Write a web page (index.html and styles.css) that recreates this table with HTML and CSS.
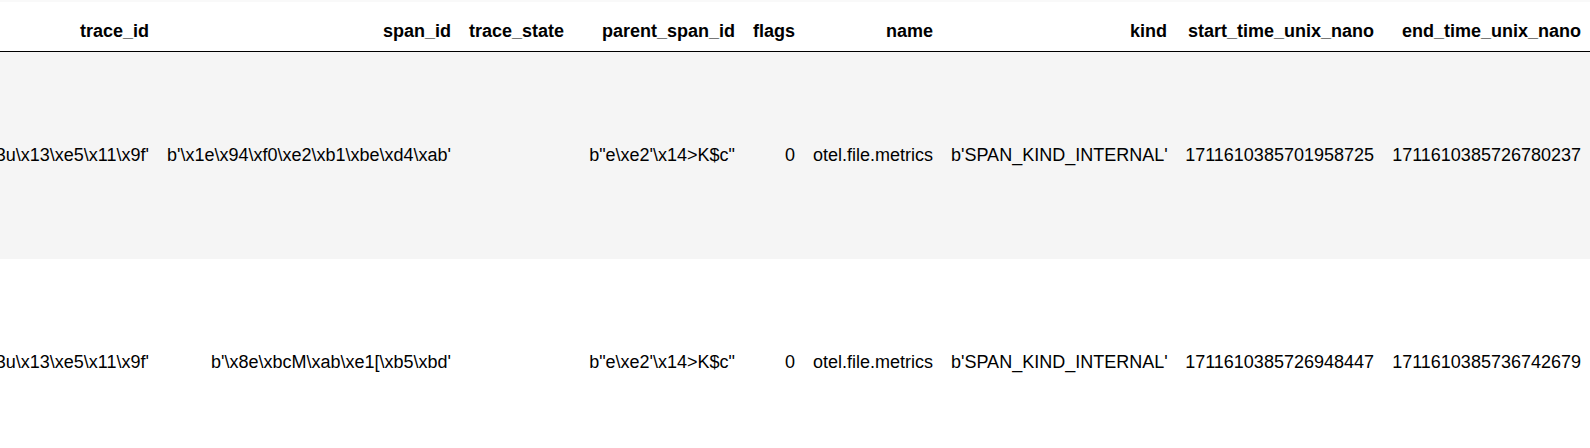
FILE: index.html
```html
<!DOCTYPE html>
<html>
<head>
<meta charset="utf-8">
<link rel="stylesheet" href="styles.css">
</head>
<body>
<div class="output">
  <div class="scroller">
    <table class="dataframe">
      <colgroup>
        <col class="c-trace">
        <col class="c-span">
        <col class="c-state">
        <col class="c-parent">
        <col class="c-flags">
        <col class="c-name">
        <col class="c-kind">
        <col class="c-time">
        <col class="c-time">
      </colgroup>
      <thead>
        <tr class="head">
          <th>trace_id</th>
          <th>span_id</th>
          <th>trace_state</th>
          <th>parent_span_id</th>
          <th>flags</th>
          <th>name</th>
          <th>kind</th>
          <th>start_time_unix_nano</th>
          <th>end_time_unix_nano</th>
        </tr>
      </thead>
      <tbody>
        <tr class="row odd">
          <td>b'\xa4\x0c\x83\xd2\x1fZ\x96\xc2\x07\x8b\x0e3u\x13\xe5\x11\x9f'</td>
          <td>b'\x1e\x94\xf0\xe2\xb1\xbe\xd4\xab'</td>
          <td></td>
          <td>b&quot;e\xe2'\x14&gt;K$c&quot;</td>
          <td>0</td>
          <td>otel.file.metrics</td>
          <td>b'SPAN_KIND_INTERNAL'</td>
          <td>1711610385701958725</td>
          <td>1711610385726780237</td>
        </tr>
        <tr class="row">
          <td>b'\xa4\x0c\x83\xd2\x1fZ\x96\xc2\x07\x8b\x0e3u\x13\xe5\x11\x9f'</td>
          <td>b'\x8e\xbcM\xab\xe1[\xb5\xbd'</td>
          <td></td>
          <td>b&quot;e\xe2'\x14&gt;K$c&quot;</td>
          <td>0</td>
          <td>otel.file.metrics</td>
          <td>b'SPAN_KIND_INTERNAL'</td>
          <td>1711610385726948447</td>
          <td>1711610385736742679</td>
        </tr>
      </tbody>
    </table>
  </div>
</div>
</body>
</html>
```

FILE: styles.css
```css
html, body {
  margin: 0;
  padding: 0;
  background: #ffffff;
}

body {
  font-family: "Liberation Sans", Arial, sans-serif;
  color: #000000;
}

.output {
  border-top: 2px solid #f9f9f9;
}

.scroller {
  display: flex;
  justify-content: flex-end;
  overflow: hidden;
}

.dataframe {
  flex-shrink: 0;
  table-layout: fixed;
  width: 2032px;
  border-collapse: separate;
  border-spacing: 0;
  font-size: 18px;
  line-height: normal;
}

.c-trace { width: 600px; }
.c-span { width: 302px; }
.c-state { width: 113px; }
.c-parent { width: 171px; }
.c-flags { width: 60px; }
.c-name { width: 138px; }
.c-kind { width: 234px; }
.c-time { width: 207px; }

.dataframe th,
.dataframe td {
  padding: 9px;
  text-align: right;
  white-space: nowrap;
}

.dataframe th {
  font-weight: bold;
  vertical-align: bottom;
  border-bottom: 1px solid #000000;
}

.dataframe td {
  vertical-align: middle;
}

.head {
  height: 50px;
}

.row {
  height: 207px;
}

.row.odd {
  background: #f5f5f5;
}
```
